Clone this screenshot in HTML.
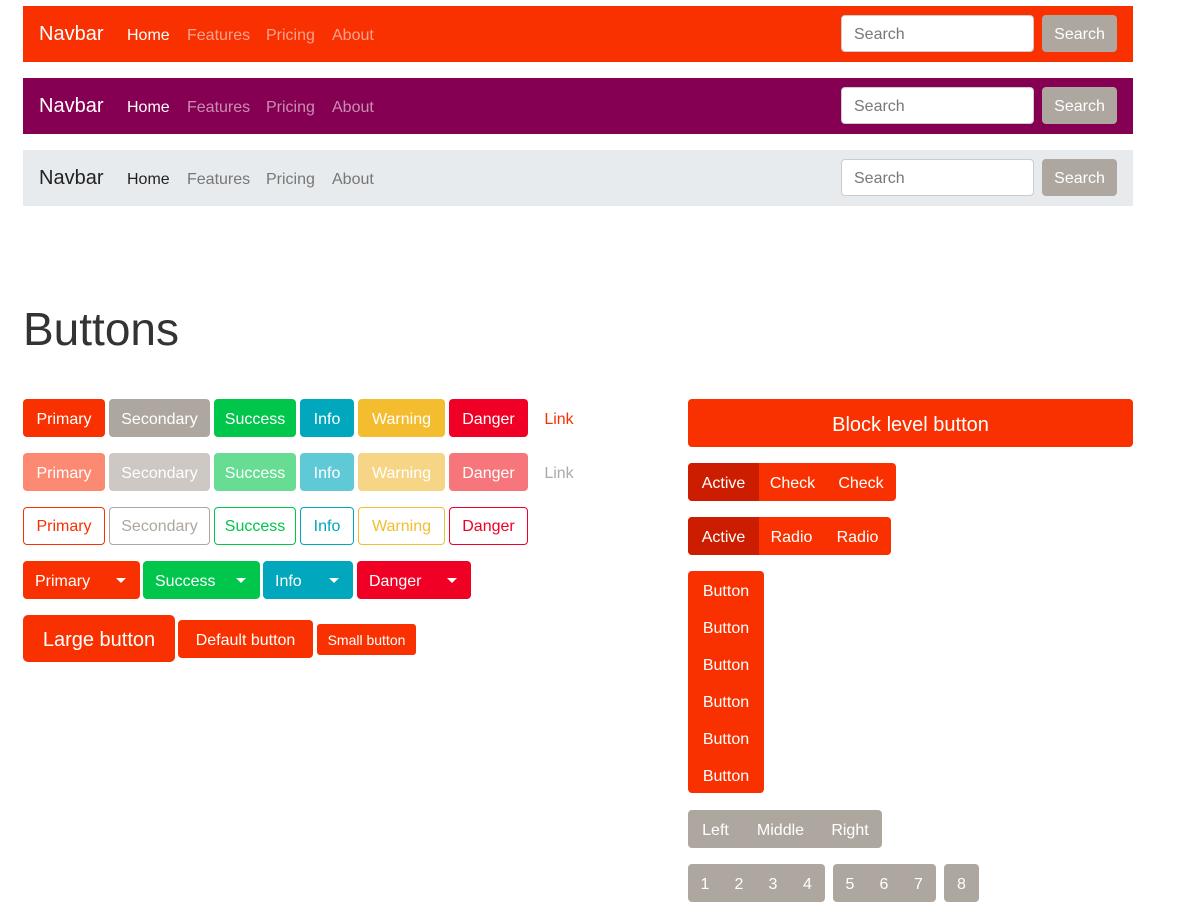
<!DOCTYPE html>
<html><head><meta charset="utf-8"><style>
*{box-sizing:border-box;margin:0;padding:0}
body{width:1201px;height:909px;background:#fff;font-family:"Liberation Sans","DejaVu Sans",sans-serif;position:relative;overflow:hidden;color:#333}
.nav{position:absolute;left:23px;width:1110px;height:56px}
.nav .brand{position:absolute;left:16px;top:17px;font-size:20px}
.nav .l{position:absolute;top:21px;font-size:16px}
.nav .in{position:absolute;left:818px;top:9px;width:193px;height:37px;background:#fff;border:1px solid #ccc;border-radius:4px;font-size:16px;color:#777;padding:10px 12px 0}
.nav .sb{position:absolute;left:1019px;top:9px;width:75px;height:37px;background:#aea79f;color:#fff;border-radius:4px;font-size:16px;text-align:center;line-height:37px;padding-top:1px}
.b{position:absolute;height:38px;line-height:38px;padding-top:2px;text-align:center;color:#fff;font-size:16px;border-radius:4px;white-space:nowrap}
.o{background:#fff!important;border:1px solid;line-height:34px}
.g{position:absolute;display:flex;border-radius:4px;overflow:hidden;background:#f93100}
.g div{height:38px;line-height:38px;padding-top:2px;color:#fff;font-size:16px;text-align:center}
.caret{display:inline-block;width:0;height:0;border-left:5px solid transparent;border-right:5px solid transparent;border-top:5px solid #fff;position:absolute;right:14px;top:17px}
</style></head><body>
<div class="nav" style="top:6px;background:#f93100;color:#fff">
<div class="brand">Navbar</div>
<div class="l" style="left:104px">Home</div><div class="l" style="left:164px;color:rgba(255,255,255,.55)">Features</div><div class="l" style="left:243px;color:rgba(255,255,255,.55)">Pricing</div><div class="l" style="left:309px;color:rgba(255,255,255,.55)">About</div>
<div class="in">Search</div><div class="sb">Search</div></div>
<div class="nav" style="top:78px;background:#850052;color:#fff">
<div class="brand">Navbar</div>
<div class="l" style="left:104px">Home</div><div class="l" style="left:164px;color:rgba(255,255,255,.55)">Features</div><div class="l" style="left:243px;color:rgba(255,255,255,.55)">Pricing</div><div class="l" style="left:309px;color:rgba(255,255,255,.55)">About</div>
<div class="in">Search</div><div class="sb">Search</div></div>
<div class="nav" style="top:150px;background:#e8ebee;color:#222">
<div class="brand">Navbar</div>
<div class="l" style="left:104px">Home</div><div class="l" style="left:164px;color:#777">Features</div><div class="l" style="left:243px;color:#777">Pricing</div><div class="l" style="left:309px;color:#777">About</div>
<div class="in">Search</div><div class="sb">Search</div></div>

<div style="position:absolute;left:23px;top:302px;font-size:46px;color:#333">Buttons</div>

<div class="b" style="top:399px;left:23px;width:82px;background:#f93100">Primary</div>
<div class="b" style="top:399px;left:109px;width:101px;background:#aea79f">Secondary</div>
<div class="b" style="top:399px;left:214px;width:82px;background:#00c64c">Success</div>
<div class="b" style="top:399px;left:300px;width:54px;background:#00a7bd">Info</div>
<div class="b" style="top:399px;left:358px;width:87px;background:#f4bd2f">Warning</div>
<div class="b" style="top:399px;left:449px;width:79px;background:#f00024">Danger</div>
<div class="b" style="top:399px;left:532px;width:54px;color:#f93100">Link</div>

<div class="b" style="top:453px;left:23px;width:82px;background:#fc8a72">Primary</div>
<div class="b" style="top:453px;left:109px;width:101px;background:#cdc8c3">Secondary</div>
<div class="b" style="top:453px;left:214px;width:82px;background:#66dd92">Success</div>
<div class="b" style="top:453px;left:300px;width:54px;background:#60c9d6">Info</div>
<div class="b" style="top:453px;left:358px;width:87px;background:#f7d586">Warning</div>
<div class="b" style="top:453px;left:449px;width:79px;background:#f6767c">Danger</div>
<div class="b" style="top:453px;left:532px;width:54px;color:#aaa">Link</div>

<div class="b o" style="top:507px;left:23px;width:82px;color:#f93100;border-color:#f93100">Primary</div>
<div class="b o" style="top:507px;left:109px;width:101px;color:#aea79f;border-color:#aea79f">Secondary</div>
<div class="b o" style="top:507px;left:214px;width:82px;color:#00c64c;border-color:#00c64c">Success</div>
<div class="b o" style="top:507px;left:300px;width:54px;color:#00a7bd;border-color:#00a7bd">Info</div>
<div class="b o" style="top:507px;left:358px;width:87px;color:#f4bd2f;border-color:#f4bd2f">Warning</div>
<div class="b o" style="top:507px;left:449px;width:79px;color:#f00024;border-color:#f00024">Danger</div>

<div class="b" style="top:561px;left:23px;width:117px;background:#f93100;text-align:left;padding-left:12px">Primary<span class="caret"></span></div>
<div class="b" style="top:561px;left:143px;width:117px;background:#00c64c;text-align:left;padding-left:12px">Success<span class="caret"></span></div>
<div class="b" style="top:561px;left:263px;width:90px;background:#00a7bd;text-align:left;padding-left:12px">Info<span class="caret"></span></div>
<div class="b" style="top:561px;left:357px;width:114px;background:#f00024;text-align:left;padding-left:12px">Danger<span class="caret"></span></div>

<div class="b" style="top:615px;left:23px;width:152px;height:47px;line-height:47px;font-size:20px;background:#f93100;border-radius:5px">Large button</div>
<div class="b" style="top:620px;left:178px;width:135px;background:#f93100">Default button</div>
<div class="b" style="top:624px;left:317px;width:99px;height:31px;line-height:31px;padding-top:1px;font-size:14px;background:#f93100;border-radius:3px">Small button</div>

<div class="b" style="top:399px;left:688px;width:445px;height:48px;line-height:48px;font-size:20px;background:#f93100">Block level button</div>
<div class="g" style="top:463px;left:688px"><div style="width:71px;background:#cc1d00">Active</div><div style="width:67px">Check</div><div style="width:70px">Check</div></div>
<div class="g" style="top:517px;left:688px"><div style="width:71px;background:#cc1d00">Active</div><div style="width:65px">Radio</div><div style="width:67px">Radio</div></div>
<div class="g" style="top:571px;left:688px;flex-direction:column;width:76px"><div style="height:37px;line-height:37px">Button</div><div style="height:37px;line-height:37px">Button</div><div style="height:37px;line-height:37px">Button</div><div style="height:37px;line-height:37px">Button</div><div style="height:37px;line-height:37px">Button</div><div style="height:37px;line-height:37px">Button</div></div>
<div class="g" style="top:810px;left:688px;background:#aea79f"><div style="width:55px">Left</div><div style="width:75px">Middle</div><div style="width:64px">Right</div></div>
<div class="g" style="top:864px;left:688px;background:#aea79f"><div style="width:34px">1</div><div style="width:34px">2</div><div style="width:34px">3</div><div style="width:35px">4</div></div>
<div class="g" style="top:864px;left:833px;background:#aea79f"><div style="width:34px">5</div><div style="width:34px">6</div><div style="width:35px">7</div></div>
<div class="g" style="top:864px;left:944px;background:#aea79f"><div style="width:35px">8</div></div>
</body></html>
